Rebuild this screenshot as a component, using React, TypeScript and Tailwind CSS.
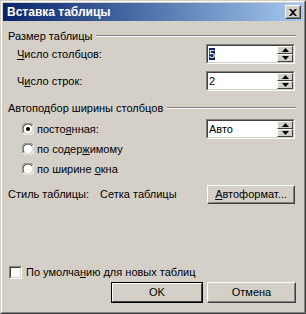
import { ReactNode } from 'react'

const face = 'bg-[#d4d0c8]'

// sunken 2px edge used for edit boxes
function Sunken({ children, className = '' }: { children: ReactNode; className?: string }) {
  return (
    <div className={`border border-t-[#808080] border-l-[#808080] border-b-white border-r-white ${className}`}>
      <div className="h-full w-full border border-t-[#404040] border-l-[#404040] border-b-[#d4d0c8] border-r-[#d4d0c8] bg-white">
        {children}
      </div>
    </div>
  )
}

function Raised({ children, className = '', dark = false }: { children: ReactNode; className?: string; dark?: boolean }) {
  return (
    <div
      className={`border ${dark ? 'border-black' : 'border-t-white border-l-white border-b-[#404040] border-r-[#404040]'} ${face} ${className}`}
    >
      <div
        className={`flex h-full w-full items-center justify-center border ${dark ? 'border-t-white border-l-white border-b-[#404040] border-r-[#404040]' : 'border-t-[#d4d0c8] border-l-[#d4d0c8] border-b-[#808080] border-r-[#808080]'}`}
      >
        {children}
      </div>
    </div>
  )
}

function SpinBtn({ up }: { up?: boolean }) {
  return (
    <div className="flex h-[8px] w-[16px] items-center justify-center border border-t-white border-l-white border-b-[#404040] border-r-[#404040] bg-[#d4d0c8]">
      <svg width="7" height="4" viewBox="0 0 7 4">
        {up ? <path d="M3.5 0 L7 4 L0 4 Z" fill="#000" /> : <path d="M0 0 L7 0 L3.5 4 Z" fill="#000" />}
      </svg>
    </div>
  )
}

function Spin({ value, selected }: { value: string; selected?: boolean }) {
  return (
    <Sunken className="h-[20px] w-[89px]">
      <div className="flex h-full items-center justify-between pr-0">
        <span className="pl-[1px] leading-[14px]">
          {selected ? <span className="bg-[#0a246a] text-white">{value}</span> : value}
        </span>
        <div className="flex flex-col">
          <SpinBtn up />
          <SpinBtn />
        </div>
      </div>
    </Sunken>
  )
}

function GroupLabel({ children }: { children: ReactNode }) {
  return (
    <div className="flex h-[14px] items-center pl-[5px] pr-[7px]">
      <span className="pr-[4px]">{children}</span>
      <div className="flex-1">
        <div className="h-px bg-[#808080]" />
        <div className="h-px bg-white" />
      </div>
    </div>
  )
}

function Radio({ checked }: { checked?: boolean }) {
  return (
    <svg width="12" height="12" viewBox="0 0 12 12" className="shrink-0">
      <path d="M11 2 A6 6 0 0 0 1 10" stroke="#808080" strokeWidth="1" fill="none" />
      <path d="M1 10 A6 6 0 0 0 11 2" stroke="#fff" strokeWidth="1" fill="none" />
      <circle cx="6" cy="6" r="4.5" fill="#fff" />
      <path d="M10 3 A4.6 4.6 0 0 0 2 9" stroke="#404040" strokeWidth="1" fill="none" />
      {checked && <circle cx="6" cy="6" r="2" fill="#000" />}
    </svg>
  )
}

const U = ({ c }: { c: string }) => <span className="underline underline-offset-1">{c}</span>

export default function App() {
  return (
    <div className="h-[314px] w-[306px] bg-white">
      <div className="h-full w-full border border-t-[#d4d0c8] border-l-[#d4d0c8] border-b-[#404040] border-r-[#404040]">
        <div
          className={`flex h-full w-full flex-col border border-t-white border-l-white border-b-[#808080] border-r-[#808080] p-px ${face} font-['Liberation_Sans',sans-serif] text-[11px] text-black`}
        >
          {/* title bar */}
          <div className="flex h-[18px] items-center justify-between bg-gradient-to-r from-[#0a246a] to-[#a6caf0] pl-[4px] pr-[2px]">
            <span className="text-[12px] font-bold text-white">Вставка таблицы</span>
            <Raised className="h-[14px] w-[16px]">
              <svg width="8" height="7" viewBox="0 0 8 7">
                <path d="M0 0 L2 0 L4 2 L6 0 L8 0 L5 3.5 L8 7 L6 7 L4 5 L2 7 L0 7 L3 3.5 Z" fill="#000" />
              </svg>
            </Raised>
          </div>

          <div className="mt-[8px]">
            <GroupLabel>Размер таблицы</GroupLabel>
          </div>

          <div className="mt-[1px] flex h-[20px] items-center justify-between pl-[14px] pr-[8px]">
            <span>
              <U c="Ч" />исло столбцов:
            </span>
            <Spin value="5" selected />
          </div>
          <div className="mt-[7px] flex h-[20px] items-center justify-between pl-[14px] pr-[8px]">
            <span>
              Ч<U c="и" />сло строк:
            </span>
            <Spin value="2" />
          </div>

          <div className="mt-[10px]">
            <GroupLabel>Автоподбор ширины столбцов</GroupLabel>
          </div>

          <div className="mt-[4px] flex h-[20px] items-center justify-between pl-[19px] pr-[8px]">
            <div className="flex items-center gap-[3px]">
              <Radio checked />
              <span>
                посто<U c="я" />нная:
              </span>
            </div>
            <Spin value="Авто" />
          </div>
          <div className="mt-[0px] flex h-[20px] items-center gap-[3px] pl-[19px]">
            <Radio />
            <span>
              по содер<U c="ж" />имому
            </span>
          </div>
          <div className="flex h-[20px] items-center gap-[3px] pl-[19px]">
            <Radio />
            <span>
              по ширине <U c="о" />кна
            </span>
          </div>

          <div className="mt-[6px] flex h-[19px] items-center pl-[5px] pr-[8px]">
            <span className="w-[92px]">Стиль таблицы:</span>
            <span className="flex-1">Сетка таблицы</span>
            <Raised className="h-[19px] w-[88px]">
              <span>
                <U c="А" />втоформат...
              </span>
            </Raised>
          </div>

          <div className="flex-1" />

          <div className="flex h-[14px] items-center gap-[4px] pl-[6px]">
            <div className="h-[13px] w-[13px] shrink-0">
              <Sunken className="h-[13px] w-[13px]">
                <span />
              </Sunken>
            </div>
            <span>
              По умолча<U c="н" />ию для новых таблиц
            </span>
          </div>

          <div className="mb-[8px] mt-[3px] flex justify-end gap-[4px] pr-[7px]">
            <Raised dark className="h-[21px] w-[92px]">
              OK
            </Raised>
            <Raised className="h-[21px] w-[89px]">Отмена</Raised>
          </div>
        </div>
      </div>
    </div>
  )
}
